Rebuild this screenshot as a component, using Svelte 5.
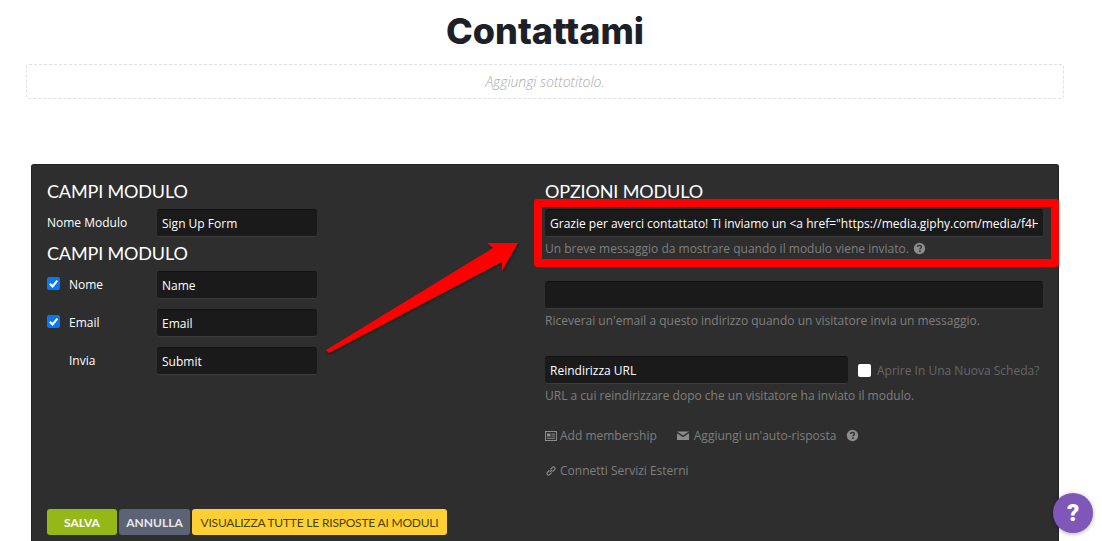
<script>
	const fields = [
		{ label: 'Nome', value: 'Name', check: true },
		{ label: 'Email', value: 'Email', check: true },
		{ label: 'Invia', value: 'Submit', check: false }
	];
	const message = 'Grazie per averci contattato! Ti inviamo un <a href="https://media.giphy.com/media/f4H0ZlKpQxLvM/giphy.gif">';
</script>

{#snippet help()}
	<svg class="help" viewBox="0 0 16 16" aria-hidden="true">
		<circle cx="8" cy="8" r="7" fill="#8c8c8c" />
		<path d="M5.700 6.300c0-1.400 1-2.100 2.300-2.100s2.300.7 2.300 1.900c0 1.700-1.800 1.500-1.800 2.900" fill="none" stroke="#2e2e2e" stroke-width="1.700" />
		<rect x="7.500" y="10.200" width="2" height="2" fill="#2e2e2e" />
	</svg>
{/snippet}

<main>
	<header>
		<h1>Contattami</h1>
		<div class="subtitle">Aggiungi sottotitolo.</div>
	</header>

	<section class="panel">
		<div class="columns">
			<div class="left">
				<h2>CAMPI MODULO</h2>
				<div class="row first">
					<span class="name">Nome Modulo</span>
					<input class="small" value="Sign Up Form" />
				</div>
				<h2 class="second">CAMPI MODULO</h2>
				{#each fields as f}
					<div class="row field">
						<span class="tick">
							{#if f.check}
								<svg viewBox="0 0 13 13" aria-hidden="true">
									<rect width="13" height="13" rx="2" fill="#0a75f5" />
									<path d="M2.800 6.800l2.700 2.600L10.400 3.600" fill="none" stroke="#fff" stroke-width="2.200" />
								</svg>
							{/if}
						</span>
						<span class="flabel">{f.label}</span>
						<input class="small" value={f.value} />
					</div>
				{/each}
			</div>

			<div class="right">
				<h2>OPZIONI MODULO</h2>
				<input class="wide" value={message} />
				<p class="hint">Un breve messaggio da mostrare quando il modulo viene inviato. {@render help()}</p>

				<input class="wide second-input" value="" />
				<p class="hint">Riceverai un'email a questo indirizzo quando un visitatore invia un messaggio.</p>

				<div class="redirect">
					<input class="url" value="Reindirizza URL" />
					<span class="box"></span>
					<span class="newtab">Aprire In Una Nuova Scheda?</span>
				</div>
				<p class="hint">URL a cui reindirizzare dopo che un visitatore ha inviato il modulo.</p>

				<div class="links">
					<span class="link">
						<svg class="ico" viewBox="0 0 12 10" aria-hidden="true">
							<path fill-rule="evenodd" d="M0 0h12v10H0zM1 1v8h10V1zM2 2.500h3.500v3H2zM6.500 2.500h3.500v1H6.500zM6.500 4.500h3.500v1H6.500zM2 6.800h8v1H2z" fill="#8c8c8c" />
						</svg>
						Add membership
					</span>
					<span class="link mail">
						<svg class="ico" viewBox="0 0 12 9" aria-hidden="true">
							<path d="M0 0h12L6 4zM0 1.800l6 4 6-4V8.500H0z" fill="#8c8c8c" />
						</svg>
						Aggiungi un'auto-risposta
					</span>
					{@render help()}
				</div>
				<div class="links last">
					<span class="link">
						<svg class="ico chain" viewBox="0 0 12 12" aria-hidden="true">
							<path d="M4.800 7.200l2.400-2.400M4.400 5.400L2.200 7.600a1.600 1.600 0 0 0 2.200 2.200l2.200-2.200M5.400 4.400l2.200-2.200a1.600 1.600 0 0 1 2.200 2.200L7.600 6.600" fill="none" stroke="#8c8c8c" stroke-width="1.200" />
						</svg>
						Connetti Servizi Esterni
					</span>
				</div>
			</div>
		</div>

		<div class="actions">
			<button class="save">SALVA</button>
			<button class="cancel">ANNULLA</button>
			<button class="all">VISUALIZZA TUTTE LE RISPOSTE AI MODULI</button>
		</div>
	</section>

	<!-- annotation drawn over the screenshot -->
	<div class="redbox"></div>
	<svg class="arrow" viewBox="0 0 1102 541" aria-hidden="true">
		<path d="M326 350L493 248L487 243L518 243L502 271L502 262L329 353Z" fill="#fe0000" />
	</svg>

	<div class="fab">?</div>
</main>

<style>
	:global(body) {
		background: #fff;
		overflow: hidden;
	}

	main {
		position: relative;
		height: 541px;
		overflow: hidden;
		font-family: "Open Sans", sans-serif;
	}

	header {
		padding: 0 38px 0 26px;
	}

	h1 {
		margin: 0;
		height: 64px;
		line-height: 62px;
		font-family: "Inter", sans-serif;
		font-size: 36px;
		font-weight: 800;
		color: #1d2027;
		text-align: center;
	}

	.subtitle {
		height: 33px;
		line-height: 33px;
		border: 1px dashed #e0e0e0;
		border-radius: 3px;
		text-align: center;
		font-size: 14px;
		font-style: italic;
		font-weight: 300;
		color: #a8a8a8;
		letter-spacing: -0.03px;
	}

	.panel {
		margin: 65px 43px 0 31px;
		height: 377px;
		box-sizing: border-box;
		background: #2e2e2e;
		border: 1px solid #222;
		border-bottom: 0;
		border-radius: 3px 3px 0 0;
		padding: 15px 15px 6px;
		display: flex;
		flex-direction: column;
		justify-content: space-between;
	}

	.columns {
		display: flex;
	}

	.left {
		width: 498px;
	}

	.right {
		width: 498px;
	}

	h2 {
		margin: 0;
		height: 22px;
		line-height: 22px;
		font-family: "Lato", sans-serif;
		font-size: 18px;
		font-weight: 400;
		letter-spacing: -0.15px;
		color: #fff;
	}

	h2.second {
		margin-top: 5px;
		margin-bottom: 7px;
	}

	.row {
		display: flex;
		align-items: center;
		font-size: 12px;
		color: #fff;
	}

	.row.first {
		margin-top: 7px;
	}

	.row.field {
		margin-bottom: 10px;
	}

	.name {
		width: 110px;
		margin-top: -1px;
	}

	.tick {
		width: 22px;
		height: 13px;
		margin-top: -4px;
	}

	.tick svg {
		display: block;
		width: 13px;
		height: 13px;
	}

	.flabel {
		width: 88px;
		margin-top: -1px;
	}

	input {
		box-sizing: border-box;
		height: 28px;
		padding: 0 5px;
		background: #1a1a1a;
		border: 0;
		border-top: 1px solid #111;
		border-bottom: 1px solid #3c3c3c;
		border-radius: 3px;
		font-family: "Open Sans", sans-serif;
		font-size: 12px;
		color: #fff;
		outline: none;
	}

	.small {
		width: 160px;
	}

	.wide {
		display: block;
		width: 498px;
		margin-top: 7px;
	}

	.second-input {
		margin-top: 24px;
	}

	.hint {
		margin: 3px 0 0;
		height: 17px;
		line-height: 17px;
		font-size: 12px;
		color: #7f7f7f;
	}

	.help {
		display: inline-block;
		width: 13px;
		height: 13px;
		margin-left: 1px;
		vertical-align: -2px;
	}

	.redirect {
		display: flex;
		align-items: center;
		margin-top: 27px;
	}

	.url {
		width: 303px;
	}

	.box {
		width: 13px;
		height: 13px;
		margin-left: 10px;
		background: #fff;
		border-radius: 2px;
	}

	.newtab {
		margin-left: 6px;
		font-size: 12px;
		color: #666;
	}

	.links {
		margin-top: 23px;
		display: flex;
		align-items: center;
		height: 17px;
		font-size: 12px;
		color: #7f7f7f;
	}

	.links.last {
		margin-top: 18px;
	}

	.link {
		display: flex;
		align-items: center;
		gap: 3px;
	}

	.mail {
		margin-left: 20px;
		gap: 5px;
	}

	.links .help {
		margin-left: 10px;
		vertical-align: 0;
	}

	.ico {
		width: 12px;
		height: 10px;
	}

	.chain {
		height: 12px;
	}

	.actions {
		display: flex;
		gap: 2px;
	}

	button {
		height: 26px;
		padding: 0;
		border: 0;
		border-radius: 3px;
		font-family: "Lato", sans-serif;
		font-size: 12px;
		font-weight: 700;
	}

	.save {
		width: 70px;
		background: #95b818;
		color: #fff;
	}

	.cancel {
		width: 71px;
		background: #5b6375;
		color: #e8e8e8;
	}

	.all {
		width: 255px;
		background: #ffd035;
		color: #4a4300;
		font-weight: 400;
		letter-spacing: -0.2px;
	}

	.redbox {
		position: absolute;
		left: 534px;
		top: 199px;
		width: 525px;
		height: 68px;
		box-sizing: border-box;
		border: 8px solid #fe0000;
		border-radius: 3px;
	}

	.arrow {
		position: absolute;
		left: 0;
		top: 0;
		width: 1102px;
		height: 541px;
		filter: drop-shadow(1px 1px 1px rgba(0, 0, 0, 0.4));
	}

	.fab {
		position: absolute;
		left: 1053px;
		top: 493px;
		width: 40px;
		height: 40px;
		border-radius: 50%;
		background: #7e57b8;
		box-shadow: 0 1px 4px rgba(0, 0, 0, 0.3);
		color: #fff;
		font-family: "Roboto", sans-serif;
		font-size: 24px;
		font-weight: 900;
		line-height: 40px;
		text-align: center;
	}
</style>
